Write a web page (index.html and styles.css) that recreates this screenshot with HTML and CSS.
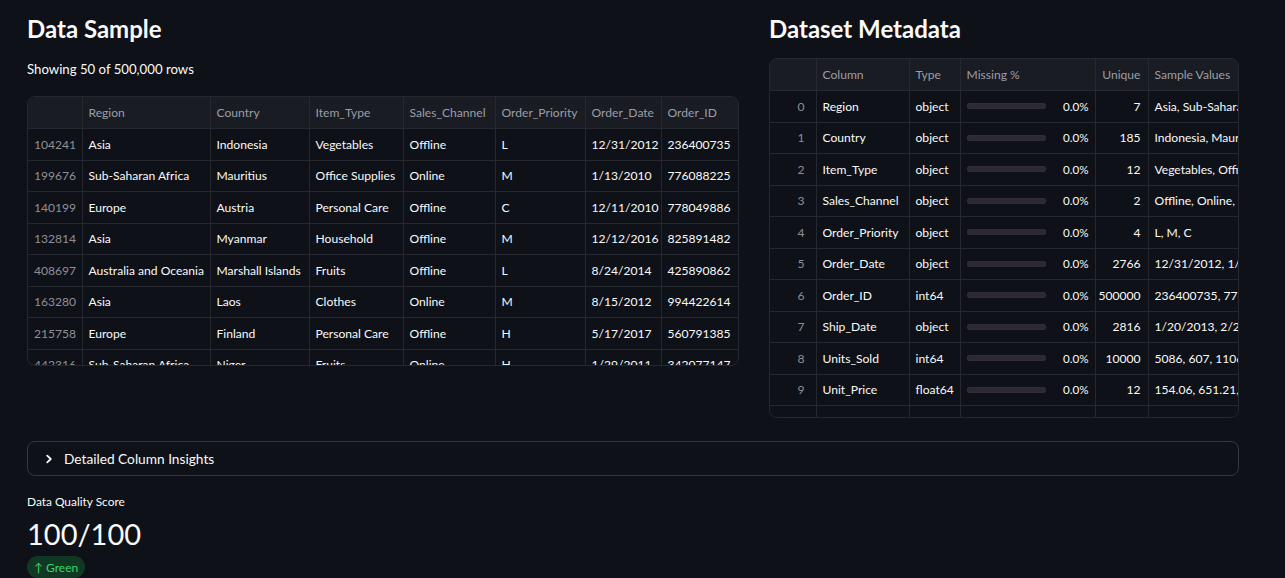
FILE: index.html
```html
<!DOCTYPE html>
<html lang="en">
<head>
<meta charset="utf-8">
<title>Dataset Overview</title>
<link rel="stylesheet" href="styles.css">
</head>
<body>
<main class="page">
  <div class="columns">
    <section class="col">
      <h2 class="heading">Data Sample</h2>
      <p class="caption">Showing 50 of 500,000 rows</p>
      <div class="grid-wrap sample-wrap">
        <table class="grid sample">
          <colgroup>
            <col style="width:54px"><col style="width:128px"><col style="width:99px"><col style="width:94px"><col style="width:92px"><col style="width:90px"><col style="width:76px"><col style="width:77px"><col style="width:80px">
          </colgroup>
          <thead>
            <tr><th></th><th>Region</th><th>Country</th><th>Item_Type</th><th>Sales_Channel</th><th>Order_Priority</th><th>Order_Date</th><th>Order_ID</th><th>Ship_Date</th></tr>
          </thead>
          <tbody>
            <tr><td class="idx">104241</td><td>Asia</td><td>Indonesia</td><td>Vegetables</td><td>Offline</td><td>L</td><td>12/31/2012</td><td>236400735</td><td>1/20/2013</td></tr>
            <tr><td class="idx">199676</td><td>Sub-Saharan Africa</td><td>Mauritius</td><td>Office Supplies</td><td>Online</td><td>M</td><td>1/13/2010</td><td>776088225</td><td>2/24/2010</td></tr>
            <tr><td class="idx">140199</td><td>Europe</td><td>Austria</td><td>Personal Care</td><td>Offline</td><td>C</td><td>12/11/2010</td><td>778049886</td><td>1/4/2011</td></tr>
            <tr><td class="idx">132814</td><td>Asia</td><td>Myanmar</td><td>Household</td><td>Offline</td><td>M</td><td>12/12/2016</td><td>825891482</td><td>1/1/2017</td></tr>
            <tr><td class="idx">408697</td><td>Australia and Oceania</td><td>Marshall Islands</td><td>Fruits</td><td>Offline</td><td>L</td><td>8/24/2014</td><td>425890862</td><td>9/8/2014</td></tr>
            <tr><td class="idx">163280</td><td>Asia</td><td>Laos</td><td>Clothes</td><td>Online</td><td>M</td><td>8/15/2012</td><td>994422614</td><td>9/1/2012</td></tr>
            <tr><td class="idx">215758</td><td>Europe</td><td>Finland</td><td>Personal Care</td><td>Offline</td><td>H</td><td>5/17/2017</td><td>560791385</td><td>6/2/2017</td></tr>
            <tr><td class="idx">442316</td><td>Sub-Saharan Africa</td><td>Niger</td><td>Fruits</td><td>Online</td><td>H</td><td>1/29/2011</td><td>342077147</td><td>2/10/2011</td></tr>
          </tbody>
        </table>
      </div>
    </section>
    <section class="col">
      <h2 class="heading">Dataset Metadata</h2>
      <div class="grid-wrap meta-wrap">
        <table class="grid meta">
          <colgroup>
            <col style="width:46px"><col style="width:93px"><col style="width:51px"><col style="width:135px"><col style="width:53px"><col style="width:160px">
          </colgroup>
          <thead>
            <tr><th></th><th>Column</th><th>Type</th><th>Missing %</th><th class="num">Unique</th><th>Sample Values</th></tr>
          </thead>
          <tbody>
            <tr><td class="idx">0</td><td>Region</td><td>object</td><td><div class="prog"><span class="bar"></span><span class="pct">0.0%</span></div></td><td class="num">7</td><td>Asia, Sub-Saharan Africa, Europe</td></tr>
            <tr><td class="idx">1</td><td>Country</td><td>object</td><td><div class="prog"><span class="bar"></span><span class="pct">0.0%</span></div></td><td class="num">185</td><td>Indonesia, Mauritius, Austria</td></tr>
            <tr><td class="idx">2</td><td>Item_Type</td><td>object</td><td><div class="prog"><span class="bar"></span><span class="pct">0.0%</span></div></td><td class="num">12</td><td>Vegetables, Office Supplies</td></tr>
            <tr><td class="idx">3</td><td>Sales_Channel</td><td>object</td><td><div class="prog"><span class="bar"></span><span class="pct">0.0%</span></div></td><td class="num">2</td><td>Offline, Online, Offline</td></tr>
            <tr><td class="idx">4</td><td>Order_Priority</td><td>object</td><td><div class="prog"><span class="bar"></span><span class="pct">0.0%</span></div></td><td class="num">4</td><td>L, M, C</td></tr>
            <tr><td class="idx">5</td><td>Order_Date</td><td>object</td><td><div class="prog"><span class="bar"></span><span class="pct">0.0%</span></div></td><td class="num">2766</td><td>12/31/2012, 1/13/2010</td></tr>
            <tr><td class="idx">6</td><td>Order_ID</td><td>int64</td><td><div class="prog"><span class="bar"></span><span class="pct">0.0%</span></div></td><td class="num">500000</td><td>236400735, 776088225</td></tr>
            <tr><td class="idx">7</td><td>Ship_Date</td><td>object</td><td><div class="prog"><span class="bar"></span><span class="pct">0.0%</span></div></td><td class="num">2816</td><td>1/20/2013, 2/24/2010</td></tr>
            <tr><td class="idx">8</td><td>Units_Sold</td><td>int64</td><td><div class="prog"><span class="bar"></span><span class="pct">0.0%</span></div></td><td class="num">10000</td><td>5086, 607, 1106</td></tr>
            <tr><td class="idx">9</td><td>Unit_Price</td><td>float64</td><td><div class="prog"><span class="bar"></span><span class="pct">0.0%</span></div></td><td class="num">12</td><td>154.06, 651.21, 81.73</td></tr>
            <tr><td class="idx">10</td><td>Unit_Cost</td><td>float64</td><td><div class="prog"><span class="bar"></span><span class="pct">0.0%</span></div></td><td class="num">12</td><td>90.93, 524.96, 56.67</td></tr>
          </tbody>
        </table>
      </div>
    </section>
  </div>

  <details class="expander">
    <summary class="expander-head">
      <svg class="chev" width="10" height="10" viewBox="0 0 10 10" aria-hidden="true"><path d="M3.2 1.6 L6.8 5 L3.2 8.4" fill="none" stroke="#fafafa" stroke-width="1.8" stroke-linecap="round" stroke-linejoin="round"/></svg>
      <span>Detailed Column Insights</span>
    </summary>
  </details>

  <div class="metric">
    <div class="metric-label">Data Quality Score</div>
    <div class="metric-value">100/100</div>
    <div class="metric-delta"><span class="arrow">↑</span> Green</div>
  </div>
</main>
</body>
</html>
```

FILE: styles.css
```css
* { box-sizing: border-box; }

html, body {
  margin: 0;
  padding: 0;
  background: #0e1117;
  color: #fafafa;
  font-family: "Source Sans Pro", Lato, "Noto Sans", sans-serif;
}

.page {
  padding: 14px 46px 0 27px;
}

.columns {
  display: grid;
  grid-template-columns: 712px 470px;
  column-gap: 30px;
}

.col {
  min-width: 0;
}

.heading {
  margin: 0;
  font-size: 24px;
  line-height: 30px;
  font-weight: 700;
}

.caption {
  margin: 15px 0 17px;
  font-size: 13.2px;
  line-height: 20px;
}

.grid-wrap {
  border: 1px solid #26282f;
  border-radius: 8px;
  overflow: hidden;
  background: #0e1117;
}

.sample-wrap { height: 270px; }

.meta-wrap {
  margin-top: 14px;
  height: 360px;
}

.grid {
  border-collapse: collapse;
  table-layout: fixed;
  font-size: 12.1px;
  white-space: nowrap;
}

.grid.sample { width: 790px; }
.grid.meta { width: 538px; }

.grid th,
.grid td {
  height: 31.5px;
  padding: 0 6px;
  border-right: 1px solid #26282f;
  border-bottom: 1px solid #26282f;
  overflow: hidden;
  text-overflow: clip;
  text-align: left;
  vertical-align: middle;
}

.grid th {
  background: #1a1c24;
  color: #9c9ea5;
  font-weight: 400;
}

.grid td {
  color: #fafafa;
}

.grid td.idx {
  color: #8e9097;
  text-align: right;
  padding-right: 11px;
}

.grid .num {
  text-align: right;
  padding-left: 2px;
  padding-right: 7px;
}

.prog {
  display: flex;
  align-items: center;
  justify-content: space-between;
}

.bar {
  width: 79px;
  height: 6px;
  border-radius: 3px;
  background: #2b2a33;
  box-shadow: inset 0 0 0 1px #332c36;
}

.pct {
  font-size: 11.6px;
}

.expander {
  margin-top: 23px;
  width: 1212px;
  border: 1px solid #34363d;
  border-radius: 8px;
}

.expander-head {
  list-style: none;
  display: flex;
  align-items: center;
  height: 33px;
  padding-left: 16px;
  gap: 10px;
  font-size: 13.7px;
  cursor: pointer;
}

.expander-head::-webkit-details-marker { display: none; }

.chev { flex: none; }

.metric {
  margin-top: 17px;
}

.metric-label {
  font-size: 11.9px;
  line-height: 18px;
}

.metric-value {
  margin-top: 4px;
  font-size: 29px;
  line-height: 38px;
  font-weight: 400;
}

.metric-delta {
  display: inline-flex;
  align-items: center;
  gap: 3px;
  margin-top: 3px;
  padding: 1px 7px;
  height: 22px;
  border-radius: 11px;
  background: rgba(33, 195, 84, 0.22);
  color: #3dd56d;
  font-size: 12px;
}
```
